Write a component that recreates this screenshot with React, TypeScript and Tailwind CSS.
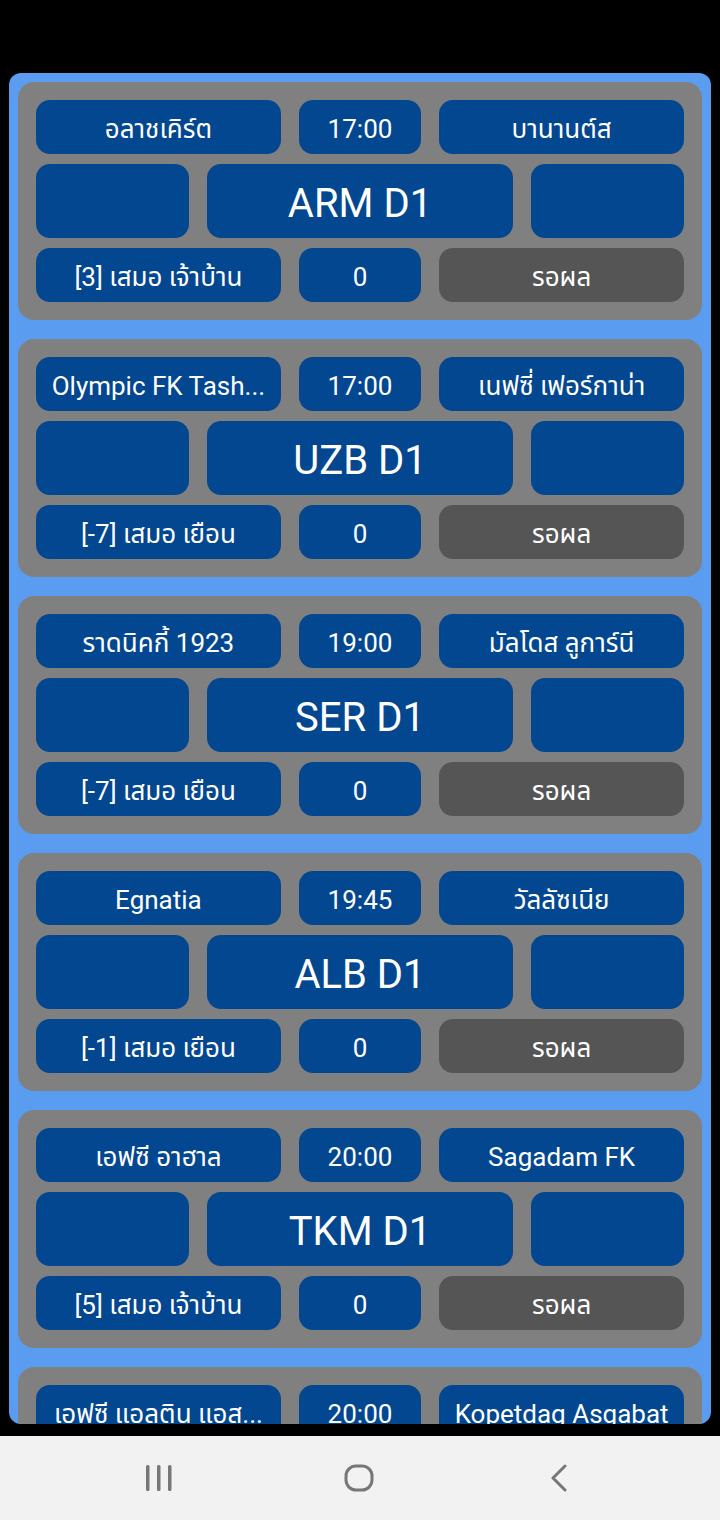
const matches = [
  { home: "อลาชเคิร์ต", time: "17:00", away: "บานานต์ส", league: "ARM D1", tip: "[3] เสมอ เจ้าบ้าน", score: "0", status: "รอผล" },
  { home: "Olympic FK Tash...", time: "17:00", away: "เนฟซี่ เฟอร์กาน่า", league: "UZB D1", tip: "[-7] เสมอ เยือน", score: "0", status: "รอผล" },
  { home: "ราดนิคกี้ 1923", time: "19:00", away: "มัลโดส ลูการ์นี", league: "SER D1", tip: "[-7] เสมอ เยือน", score: "0", status: "รอผล" },
  { home: "Egnatia", time: "19:45", away: "วัลลัซเนีย", league: "ALB D1", tip: "[-1] เสมอ เยือน", score: "0", status: "รอผล" },
  { home: "เอฟซี อาฮาล", time: "20:00", away: "Sagadam FK", league: "TKM D1", tip: "[5] เสมอ เจ้าบ้าน", score: "0", status: "รอผล" },
  { home: "เอฟซี แอลติน แอส...", time: "20:00", away: "Kopetdag Asgabat", league: "TKM D1", tip: "[0] เสมอ เจ้าบ้าน", score: "0", status: "รอผล" },
];

const pill = "flex items-center justify-center pt-[5px] rounded-[14px] bg-[#02478f] text-white whitespace-nowrap overflow-hidden";

function MatchCard({ m }: { m: (typeof matches)[number] }) {
  return (
    <div className="shrink-0 h-[238px] rounded-[16px] bg-[#808080] px-[18px] py-[18px] flex flex-col gap-[10px]">
      <div className="grid grid-cols-[2fr_1fr_2fr] gap-[18px] h-[54px] text-[26px]">
        <div className={pill}>{m.home}</div>
        <div className={pill}>{m.time}</div>
        <div className={pill}>{m.away}</div>
      </div>
      <div className="grid grid-cols-[1fr_2fr_1fr] gap-[18px] h-[74px]">
        <div className={pill} />
        <div className={`${pill} text-[40px]`}>{m.league}</div>
        <div className={pill} />
      </div>
      <div className="grid grid-cols-[2fr_1fr_2fr] gap-[18px] h-[54px] text-[26px]">
        <div className={pill}>{m.tip}</div>
        <div className={pill}>{m.score}</div>
        <div className="flex items-center justify-center pt-[5px] rounded-[14px] bg-[#555555] text-white">{m.status}</div>
      </div>
    </div>
  );
}

export default function App() {
  return (
    <div
      className="h-[1520px] w-[720px] bg-black flex flex-col overflow-hidden"
      style={{ fontFamily: 'Roboto, "Noto Sans", "Noto Sans Thai", "Liberation Sans", sans-serif' }}
    >
      <div className="h-[73px] shrink-0" />
      <div className="mx-[9px] h-[1351px] shrink-0 rounded-[12px] bg-[#5a9cf0] p-[9px] overflow-hidden flex flex-col gap-[19px]">
        {matches.map((m, i) => (
          <MatchCard key={i} m={m} />
        ))}
      </div>
      <div className="h-[12px] shrink-0" />
      {/* nav bar */}
      <div className="flex-1 bg-[#f2f2f2] flex items-center pl-[145px]">
        <svg width="28" height="26" viewBox="0 0 28 26">
          <rect x="1" y="0" width="3.5" height="26" rx="1.5" fill="#777" />
          <rect x="12" y="0" width="3.5" height="26" rx="1.5" fill="#777" />
          <rect x="23" y="0" width="3.5" height="26" rx="1.5" fill="#777" />
        </svg>
        <svg className="ml-[171px]" width="30" height="28" viewBox="0 0 30 28">
          <rect x="2" y="2" width="26" height="24" rx="10" fill="none" stroke="#777" strokeWidth="3" />
        </svg>
        <svg className="ml-[176px]" width="18" height="28" viewBox="0 0 18 28">
          <path d="M15 2 L3 14 L15 26" fill="none" stroke="#777" strokeWidth="3" strokeLinecap="round" strokeLinejoin="round" />
        </svg>
      </div>
    </div>
  );
}
